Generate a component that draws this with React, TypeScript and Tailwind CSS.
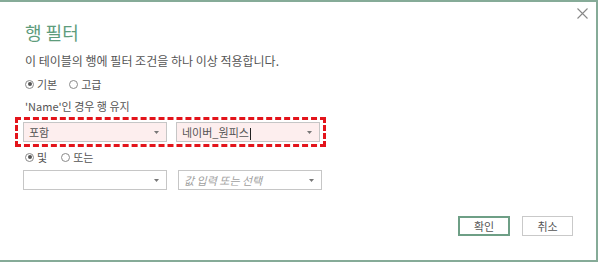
import React from 'react'

const font = { fontFamily: '"Noto Sans CJK KR", "Noto Sans", sans-serif' }

const Radio = ({ checked, label }: { checked?: boolean; label: string }) => (
  <label className="flex items-center gap-[3px]">
    <span className="w-[9px] h-[9px] rounded-full border border-[#8a8a8a] bg-white flex items-center justify-center">
      {checked && <span className="w-[4px] h-[4px] rounded-full bg-[#555]" />}
    </span>
    <span>{label}</span>
  </label>
)

const Select = ({ value, placeholder, tinted, caret }: { value?: string; placeholder?: string; tinted?: boolean; caret?: boolean }) => (
  <div
    className={
      'w-[144px] h-[20px] border border-[#c6c6c6] flex items-center justify-between pl-[5px] pr-[7px] text-[11px] ' +
      (tinted ? 'bg-[#fdeeee]' : 'bg-white')
    }
  >
    <span className={placeholder ? 'italic text-[#a0a0a0]' : 'text-[#555]'}>
      {value ?? placeholder}
      {caret && <span className="inline-block w-px h-[12px] bg-[#222] align-middle ml-px" />}
    </span>
    <svg width="5" height="3" viewBox="0 0 5 3" className="fill-[#777]">
      <path d="M0 0 L5 0 L2.5 3 Z" />
    </svg>
  </div>
)

const App = () => {
  return (
    <div className="w-[600px] h-[263px] bg-white overflow-hidden" style={font}>
      <div className="w-[598px] h-[262px] border-t-2 border-r-2 border-b-2 border-[#86ab98] relative text-[#555]">
        <button className="absolute right-[8px] top-[6px] text-[#888]">
          <svg width="11" height="11" viewBox="0 0 11 11" stroke="currentColor" strokeWidth="1.1">
            <path d="M0.5 0.5 L10.5 10.5 M10.5 0.5 L0.5 10.5" />
          </svg>
        </button>

        <div className="pl-[25px] pt-[18px]">
          <h1 className="text-[18px] leading-[24px] text-[#5e9c7c]">행 필터</h1>
          <p className="mt-[8px] text-[12px] leading-[17px] text-[#555]">이 테이블의 행에 필터 조건을 하나 이상 적용합니다.</p>
          <div className="mt-[8px] flex gap-[12px] text-[11px] leading-[14px]">
            <Radio checked label="기본" />
            <Radio label="고급" />
          </div>
          <p className="mt-[7px] text-[11px] leading-[16px]">'Name'인 경우 행 유지</p>
        </div>

        <div className="ml-[15px] mt-[3px] w-[311px] h-[30px] border-[3px] border-dashed border-[#e3141b] flex items-center gap-[9px] pl-[5px]">
          <Select value="포함" tinted />
          <Select value="네이버_원피스" tinted caret />
        </div>

        <div className="pl-[25px] mt-[3px] flex gap-[14px] text-[11px] leading-[14px]">
          <Radio checked label="및" />
          <Radio label="또는" />
        </div>

        <div className="pl-[23px] mt-[6px] flex gap-[11px]">
          <Select value="" />
          <Select placeholder="값 입력 또는 선택" />
        </div>

        <div className="absolute left-[458px] top-[214px] flex gap-[12px] text-[11px]">
          <button className="w-[52px] h-[20px] border-2 border-[#6e9f86] bg-white text-[#555]">확인</button>
          <button className="w-[51px] h-[20px] border border-[#c9c9c9] bg-white text-[#555]">취소</button>
        </div>
      </div>
    </div>
  )
}

export default App
